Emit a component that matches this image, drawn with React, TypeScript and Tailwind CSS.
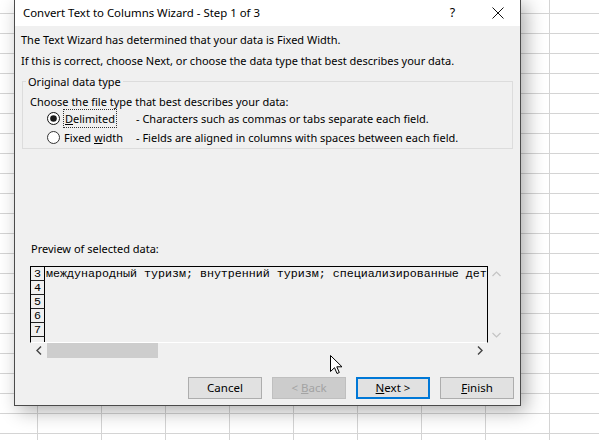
import React from "react";

const ui = { fontFamily: '"Noto Sans", "Open Sans", sans-serif' };
const mono = { fontFamily: '"Liberation Mono", "Courier New", monospace' };

function Radio({ checked }: { checked: boolean }) {
  return (
    <svg width="13" height="13" viewBox="0 0 13 13" className="shrink-0">
      <circle cx="6.5" cy="6.5" r="6" fill="#fff" stroke={checked ? "#111" : "#333"} strokeWidth="1" />
      {checked && <circle cx="6.5" cy="6.5" r="3.3" fill="#1a1a1a" />}
    </svg>
  );
}

function Btn({
  children,
  variant = "normal",
}: {
  children: React.ReactNode;
  variant?: "normal" | "disabled" | "default";
}) {
  const cls =
    variant === "disabled"
      ? "bg-[#cccccc] border border-[#bfbfbf] text-[#a3a3a3]"
      : variant === "default"
      ? "bg-[#e1e1e1] border-2 border-[#0078d7] text-black"
      : "bg-[#e1e1e1] border border-[#adadad] text-black";
  return (
    <div
      className={`w-[74px] h-[22px] flex items-center justify-center text-[11.5px] leading-none ${cls}`}
    >
      {children}
    </div>
  );
}

export default function App() {
  const rows = ["3", "4", "5", "6", "7", ""];
  return (
    <div
      className="relative w-[599px] h-[440px] overflow-hidden bg-white [background-image:linear-gradient(to_right,#d4d4d4_1px,transparent_1px),linear-gradient(to_bottom,#d4d4d4_1px,transparent_1px)] [background-size:64px_20px] [background-position:37px_13px]"
      style={ui}
    >
      {/* dialog window */}
      <div className="absolute left-[14px] top-[-1px] w-[507px] h-[407px] border border-[#4b4b4b] bg-[#f0f0f0] shadow-[5px_5px_18px_rgba(0,0,0,0.32)] flex flex-col">
        {/* title bar */}
        <div className="h-[26px] bg-white flex items-center shrink-0">
          <div className="pl-[8px] text-[11.4px] text-black leading-none flex-1">
            Convert Text to Columns Wizard - Step 1 of 3
          </div>
          <div className="w-[45px] text-center text-[12.5px] text-black leading-none">?</div>
          <div className="w-[45px] flex items-center justify-center">
            <svg width="12" height="12" viewBox="0 0 12 12">
              <path d="M0.5 0.5 L11.5 11.5 M11.5 0.5 L0.5 11.5" stroke="#111" strokeWidth="1" />
            </svg>
          </div>
        </div>

        {/* body */}
        <div className="flex flex-col text-[11px] text-black leading-[15px]">
          <div className="mt-[6px] pl-[6px]">
            The Text Wizard has determined that your data is Fixed Width.
          </div>
          <div className="mt-[6px] pl-[6px]">
            If this is correct, choose Next, or choose the data type that best describes your data.
          </div>

          <fieldset className="mt-[6px] ml-[7px] w-[491px] h-[75px] border border-[#dcdcdc] pl-[7px] pt-[5px]">
            <legend className="ml-[-4px] px-[2px]">Original data type</legend>
            <div>Choose the file type that best describes your data:</div>
            <div className="flex items-center h-[19px] pl-[17px]">
              <Radio checked />
              <div className="w-[76px] pl-[3px]">
                <span className="border border-dotted border-[#333] px-[1px] py-[1px]">
                  <span className="underline">D</span>elimited
                </span>
              </div>
              <div>- Characters such as commas or tabs separate each field.</div>
            </div>
            <div className="flex items-center h-[19px] pl-[17px]">
              <Radio checked={false} />
              <div className="w-[76px] pl-[4px]">
                Fixed <span className="underline">w</span>idth
              </div>
              <div>- Fields are aligned in columns with spaces between each field.</div>
            </div>
          </fieldset>

          <div className="mt-[92px] pl-[16px]">Preview of selected data:</div>

          {/* preview */}
          <div className="mt-[10px] ml-[15px] w-[474px] flex flex-col">
            <div className="flex h-[77px]">
              <div className="w-[458px] border-t border-l border-r border-black border-b border-b-white overflow-hidden flex flex-col">
                {rows.map((r, i) => (
                  <div key={i} className="flex h-[14px] shrink-0">
                    <div
                      className="w-[14px] h-[14px] shrink-0 border-r border-black border-b border-b-[#222] text-[11.67px] leading-[14px] text-center"
                      style={mono}
                    >
                      {r}
                    </div>
                    <div
                      className="pl-[1px] text-[11.67px] leading-[14px] whitespace-nowrap"
                      style={mono}
                    >
                      {i === 0
                        ? "международный туризм; внутренний туризм; специализированные детские"
                        : ""}
                    </div>
                  </div>
                ))}
              </div>
              <div className="w-[16px] flex flex-col items-center justify-between py-[5px]">
                <svg width="9" height="6" viewBox="0 0 9 6">
                  <path d="M0.5 5 L4.5 1 L8.5 5" fill="none" stroke="#c4c4c4" strokeWidth="1.2" />
                </svg>
                <svg width="9" height="6" viewBox="0 0 9 6">
                  <path d="M0.5 1 L4.5 5 L8.5 1" fill="none" stroke="#c4c4c4" strokeWidth="1.2" />
                </svg>
              </div>
            </div>
            <div className="flex h-[15px] items-center w-[458px]">
              <div className="w-[17px] flex justify-center">
                <svg width="6" height="9" viewBox="0 0 6 9">
                  <path d="M5 0.5 L1 4.5 L5 8.5" fill="none" stroke="#444" strokeWidth="1.4" />
                </svg>
              </div>
              <div className="w-[111px] h-[15px] bg-[#cdcdcd]" />
              <div className="flex-1" />
              <div className="w-[17px] flex justify-center">
                <svg width="6" height="9" viewBox="0 0 6 9">
                  <path d="M1 0.5 L5 4.5 L1 8.5" fill="none" stroke="#444" strokeWidth="1.4" />
                </svg>
              </div>
            </div>
          </div>

          {/* buttons */}
          <div className="mt-[19px] flex justify-end gap-[10px] pr-[6px]">
            <Btn>Cancel</Btn>
            <Btn variant="disabled">
              &lt; <span className="underline ml-[3px]">B</span>ack
            </Btn>
            <Btn variant="default">
              <span className="underline">N</span>ext &gt;
            </Btn>
            <Btn>
              <span className="underline">F</span>inish
            </Btn>
          </div>
        </div>
      </div>

      {/* mouse cursor */}
      <svg
        className="absolute left-[330px] top-[355px]"
        width="13"
        height="20"
        viewBox="0 0 13 20"
      >
        <path
          d="M0.5 0.5 L0.5 16.5 L4.5 12.7 L7 18.5 L9.3 17.5 L6.8 11.8 L12 11.8 Z"
          fill="#fff"
          stroke="#000"
          strokeWidth="1"
        />
      </svg>
    </div>
  );
}
